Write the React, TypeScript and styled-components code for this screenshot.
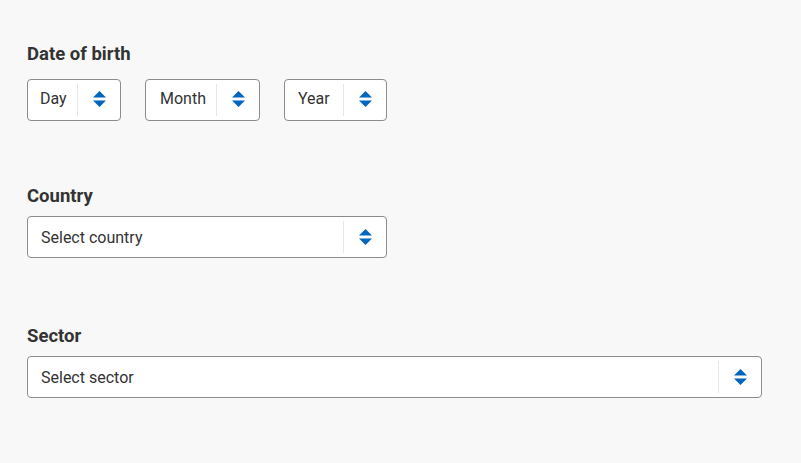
import React from "react";
import styled, { createGlobalStyle } from "styled-components";

const Global = createGlobalStyle`
  html, body { margin: 0; padding: 0; background: #f8f8f8; }
  body { font-family: Roboto, "Liberation Sans", Arial, sans-serif; color: #333; }
`;

const Page = styled.div`
  width: 801px;
  height: 463px;
  box-sizing: border-box;
  padding: 43px 27px 0 27px;
  background: #f8f8f8;
`;

const Group = styled.div<{ $top?: number; $gap: number }>`
  display: flex;
  flex-direction: column;
  align-items: flex-start;
  gap: ${(p) => p.$gap}px;
  margin-top: ${(p) => p.$top ?? 0}px;
`;

const Label = styled.div`
  font-size: 18.5px;
  line-height: 22px;
  font-weight: 700;
  color: #333;
`;

const Row = styled.div`
  display: flex;
  gap: 24px;
`;

const Box = styled.div<{ $width: number }>`
  box-sizing: border-box;
  width: ${(p) => p.$width}px;
  height: 42px;
  display: flex;
  align-items: stretch;
  background: #fff;
  border: 1px solid #8c8c8c;
  border-radius: 4px;
`;

const Value = styled.span<{ $pad: number; $lift: number }>`
  flex: 1;
  display: flex;
  align-items: center;
  padding-left: ${(p) => p.$pad}px;
  padding-bottom: ${(p) => p.$lift}px;
  font-size: 16px;
  color: #333;
  white-space: nowrap;
`;

const Divider = styled.span`
  width: 1px;
  margin: 4px 0;
  background: #e6e6e6;
`;

const ArrowCell = styled.span<{ $lift: number }>`
  width: 42px;
  display: flex;
  align-items: center;
  justify-content: center;
  padding-bottom: ${(p) => p.$lift}px;
`;

const Arrows = () => (
  <svg width="13" height="16" viewBox="0 0 13 16" aria-hidden="true">
    <path d="M6.5 0 L13 6.5 L0 6.5 Z" fill="#0065bd" />
    <path d="M0 9.5 L13 9.5 L6.5 16 Z" fill="#0065bd" />
  </svg>
);

const Select = ({
  text,
  width,
  pad = 13,
  lift = 0,
}: {
  text: string;
  width: number;
  pad?: number;
  lift?: number;
}) => (
  <Box $width={width}>
    <Value $pad={pad} $lift={lift}>{text}</Value>
    <Divider />
    <ArrowCell $lift={lift}>
      <Arrows />
    </ArrowCell>
  </Box>
);

export default function App() {
  return (
    <>
      <Global />
      <Page>
        <Group $gap={14}>
          <Label>Date of birth</Label>
          <Row>
            <Select text="Day" width={94} pad={12} lift={3} />
            <Select text="Month" width={115} pad={14} lift={3} />
            <Select text="Year" width={103} pad={13} lift={3} />
          </Row>
        </Group>
        <Group $top={64} $gap={9}>
          <Label>Country</Label>
          <Select text="Select country" width={360} pad={13} />
        </Group>
        <Group $top={67} $gap={9}>
          <Label>Sector</Label>
          <Select text="Select sector" width={735} pad={13} />
        </Group>
      </Page>
    </>
  );
}
